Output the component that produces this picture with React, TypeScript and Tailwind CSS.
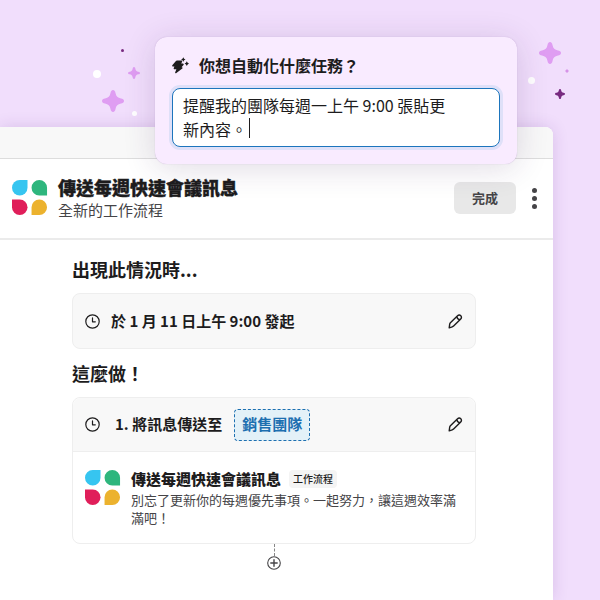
import React from 'react';

const Petals: React.FC = () => (
  <svg width="36" height="36" viewBox="0 0 36 36" className="shrink-0" aria-hidden="true">
    <path d="M7.700 0h7.800v7.800a7.750 7.750 0 1 1-7.800-7.800z" fill="#36c5f0" />
    <path d="M27.300 0a7.750 7.750 0 0 1 7.750 7.750v7.750h-7.750a7.750 7.750 0 0 1 0-15.500z" fill="#2eb67d" />
    <path d="M0 19.500h7.750a7.750 7.750 0 1 1-7.750 7.750z" fill="#e01e5a" />
    <path d="M27.300 19.500a7.750 7.750 0 1 1 0 15.500h-7.750v-7.750a7.750 7.750 0 0 1 7.750-7.750z" fill="#ecb22e" />
  </svg>
);

const Sparkle: React.FC<{ size: number; className: string }> = ({ size, className }) => (
  <svg width={size} height={size} viewBox="0 0 22 22" className={`absolute ${className}`} aria-hidden="true">
    <path
      fill="currentColor"
      d="M11 0c1.500 0 2.200 1.400 2.500 3 .6 3.300 2.200 4.900 5.500 5.500 1.600.3 3 1 3 2.500s-1.400 2.200-3 2.500c-3.300.6-4.900 2.200-5.500 5.500-.3 1.600-1 3-2.500 3s-2.200-1.400-2.500-3c-.6-3.300-2.200-4.900-5.500-5.500-1.600-.3-3-1-3-2.500s1.400-2.200 3-2.500c3.300-.6 4.900-2.200 5.500-5.500.3-1.600 1-3 2.500-3z"
    />
  </svg>
);

const MagicBolt: React.FC = () => (
  <svg width="17" height="17" viewBox="0 0 17 17" className="shrink-0" fill="#1d1c1d" aria-hidden="true">
    <path d="M5 3.500h4.400c.7 0 1 .6.700 1.200L9.200 6.600h1.600c.9 0 1.200.9.700 1.500l-2 2.200h.3c.9 0 1.100.8.500 1.300L4.400 16c-.7.500-1.500 0-1.200-.8l1.200-3H2.600c-.8 0-1.100-.6-.8-1.300l.6-1.400H1c-.8 0-1-.7-.7-1.300l3.400-4c.4-.5.800-.7 1.300-.7z" />
    <path d="M11.300.2l.8 1.500 1.400.8-1.400.8-.8 1.500-.8-1.500-1.400-.8 1.400-.8z" />
    <path d="M14.800 4.300l.8 1.500 1.400.8-1.400.8-.8 1.500-.8-1.500-1.400-.8 1.400-.8z" />
  </svg>
);

const ClockIcon: React.FC = () => (
  <svg width="15" height="15" viewBox="0 0 15 15" className="shrink-0" fill="none" stroke="#1d1c1d" strokeWidth="1.200" aria-hidden="true">
    <circle cx="7.500" cy="7.500" r="6.700" />
    <path d="M7.500 3.900v3.900h2.800" strokeLinecap="round" strokeLinejoin="round" />
  </svg>
);

const PencilIcon: React.FC = () => (
  <svg width="15" height="15" viewBox="0 0 15 15" fill="none" stroke="#1d1c1d" strokeWidth="1.400" strokeLinejoin="round" aria-hidden="true">
    <path d="M1.200 13.800l.5-3.700c.1-.5.3-.9.7-1.300L9.300 2c1.200-1.200 2.600-1.200 3.500-.3s.9 2.300-.3 3.500l-6.900 6.900c-.4.4-.8.600-1.300.700z" />
    <path d="M8.800 2.600c.3 1.700 1.400 2.800 3.100 3.100" />
  </svg>
);

const EditButton: React.FC<{ label: string }> = ({ label }) => (
  <button type="button" aria-label={label} className="ml-auto shrink-0">
    <PencilIcon />
  </button>
);

export default function App() {
  return (
    <div className="relative flex min-h-screen flex-col overflow-hidden bg-[#f1defc] pt-[127px] font-['Noto_Sans_CJK_TC',sans-serif] text-[#1d1c1d]" lang="zh-Hant">
      {/* Decorations */}
      <Sparkle size={22} className="left-[102px] top-[90px] text-[#df9df2]" />
      <Sparkle size={12} className="left-[128px] top-[67px] text-[#df9df2]" />
      <Sparkle size={22} className="left-[539px] top-[42px] text-[#df9df2]" />
      <Sparkle size={10} className="left-[555px] top-[89px] text-[#782a80]" />
      <Sparkle size={4} className="left-[565px] top-[69px] text-[#d48de6]" />
      <span className="absolute left-[121px] top-[49px] size-[3px] rounded-full bg-[#782a80]" />
      <span className="absolute left-[93px] top-[70px] size-2 rounded-full bg-white" />
      <span className="absolute left-[132px] top-[111px] size-[5px] rounded-full bg-white" />
      <span className="absolute left-[528px] top-[77px] size-[7px] rounded-full bg-white" />

      {/* Workflow window */}
      <main className="mr-[47px] flex flex-1 flex-col rounded-tr-lg bg-white shadow-[0_0_16px_rgba(90,40,130,0.16)]">
        <div className="h-8 rounded-tr-lg border-b border-[#dddddd] bg-[#f8f8f8]" />

        <header className="flex h-[81px] items-center border-b-2 border-[#ebebeb] pr-4 pb-px pl-3">
          <Petals />
          <div className="ml-[10px]">
            <h1 className="text-[18px] leading-6 font-black [-webkit-text-stroke:thin]">傳送每週快速會議訊息</h1>
            <p className="text-[15px] leading-[22px] text-[#454447]">全新的工作流程</p>
          </div>
          <button type="button" className="ml-auto h-8 rounded-md bg-[#e8e8e8] px-[18px] text-[13px] font-bold text-[#454447]">
            完成
          </button>
          <button type="button" aria-label="更多" className="ml-4 flex w-[5px] flex-col items-center gap-[3px]">
            <span className="size-[5px] rounded-full bg-[#454447]" />
            <span className="size-[5px] rounded-full bg-[#454447]" />
            <span className="size-[5px] rounded-full bg-[#454447]" />
          </button>
        </header>

        <div className="pt-[17px] pr-[77px] pb-6 pl-[72px]">
          <h2 className="text-[18px] leading-6 font-bold">出現此情況時...</h2>
          <section className="mt-3 flex h-14 items-center rounded-lg border border-[#eeeeee] bg-[#f8f8f8] px-3">
            <ClockIcon />
            <p className="ml-[11px] text-[15px] font-bold">於 1 月 11 日上午 9:00 發起</p>
            <EditButton label="編輯時間" />
          </section>

          <h2 className="mt-3 text-[18px] leading-6 font-bold">這麼做！</h2>
          <section className="mt-3 rounded-lg border border-[#eeeeee]">
            <div className="flex h-[54px] items-center rounded-t-lg border-b border-[#eeeeee] bg-[#f8f8f8] px-3">
              <ClockIcon />
              <p className="ml-[15px] text-[15px] font-bold">1. 將訊息傳送至</p>
              <span className="ml-3 flex h-8 items-center rounded border border-dashed border-[#1d6fb0] bg-[#e3f1f8] px-[7px] text-[15px] font-bold text-[#1d6fb0]">
                銷售團隊
              </span>
              <EditButton label="編輯訊息" />
            </div>
            <div className="flex items-start px-3 pt-[18px] pb-4">
              <Petals />
              <div className="ml-[10px] min-w-0 flex-1">
                <div className="flex items-center gap-2">
                  <h3 className="text-[15px] leading-[18px] font-black">傳送每週快速會議訊息</h3>
                  <span className="rounded-sm bg-[#f4f4f4] px-1 text-[10px] leading-[18px] font-medium">工作流程</span>
                </div>
                <p className="mt-[3px] text-[13px] leading-[18px] text-[#454447]">
                  別忘了更新你的每週優先事項。一起努力，讓這週效率滿滿吧！
                </p>
              </div>
            </div>
          </section>
          <div className="flex flex-col items-center">
            <span className="h-3 border-l border-dashed border-[#868686]" />
            <button type="button" aria-label="新增步驟">
              <svg width="14" height="14" viewBox="0 0 14 14" fill="none" stroke="#454447" strokeWidth="1.100">
                <circle cx="7" cy="7" r="6.300" />
                <path d="M7 3.800v6.400M3.800 7h6.400" strokeWidth="1.400" strokeLinecap="round" />
              </svg>
            </button>
          </div>
        </div>
      </main>

      {/* Prompt card */}
      <div className="absolute top-[37px] right-[83px] left-[155px] rounded-xl bg-[#f9ebff] px-[17px] pt-4 pb-[17px] shadow-[0_0_1px_rgba(90,40,130,0.3),0_4px_32px_rgba(60,30,90,0.16)]">
        <label htmlFor="prompt" className="flex items-center gap-[10px] text-[16px] leading-6 font-bold">
          <MagicBolt />
          你想自動化什麼任務？
        </label>
        <div className="relative mt-[11px]">
          <textarea
            id="prompt"
            rows={2}
            defaultValue="提醒我的團隊每週一上午 9:00 張貼更新內容。"
            className="block w-full resize-none overflow-hidden rounded-lg border border-[#1d75bd] bg-white pt-1 pr-[50px] pb-[5px] pl-[10px] text-[16px] leading-6 text-[#1d1c1d] shadow-[0_0_0_3px_#dfe0f8] outline-none"
          />
          <span className="absolute top-[30px] left-[77px] h-5 w-px bg-[#1d1c1d]" />
        </div>
      </div>
    </div>
  );
}
